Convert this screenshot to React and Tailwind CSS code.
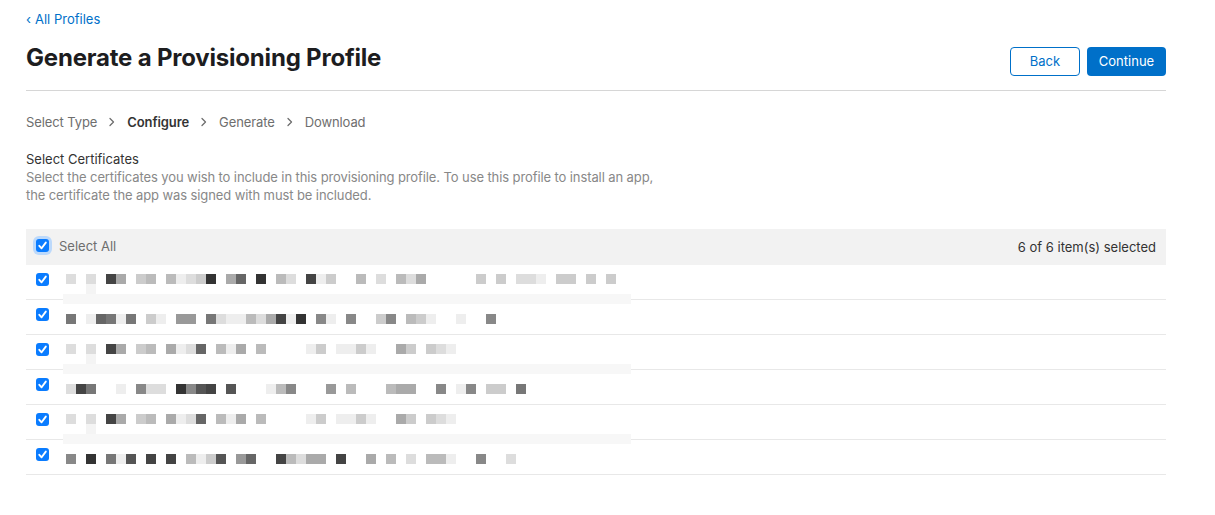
import React from "react";

const font = { fontFamily: "Inter, 'Noto Sans', sans-serif" };

// redacted names, one char per 10px cell: '3' dark ... 'f' white
const rows = [
  { text: "dfdf4afcbfbedc3fa6f3fbdf4ecffbfdfbdafffffcfcfddefccfcfc", tall: true },
  { text: "7fe67e7fcef99f7deebda4e3f8ef8ffc8fbceffeff8" },
  { text: "dfdf4afcbfaed6fbeafbffffecfeeceffacfcde", tall: true },
  { text: "d47ffef8ddf3854f5fffeb8fff9fbfffbaaff8fe8fccf7f" },
  { text: "dfdf4afcbfaed6fbeafbffffecfeeceffacfcde", tall: true },
  { text: "8f3f7e5f4f4fbec5f96ff4bdaaf4ffafbfdfbbeff8ffd" },
];

function shade(c) {
  return c === "f" ? "#ffffff" : "#" + c.repeat(6);
}

function Check({ focus }) {
  return (
    <span
      className={`flex w-[13px] h-[13px] shrink-0 items-center justify-center rounded-[3px] bg-[#0a7cff] ${
        focus ? "shadow-[0_0_0_3px_#bcd9fb]" : ""
      }`}
    >
      <svg width="11" height="11" viewBox="0 0 11 11" fill="none">
        <path d="M2.3 5.8 L4.6 8.3 L8.8 2.6" stroke="white" strokeWidth="1.9" strokeLinecap="round" strokeLinejoin="round" />
      </svg>
    </span>
  );
}

function Chevron() {
  return (
    <svg width="8" height="10" viewBox="0 0 8 10" fill="none" className="mx-[11px]">
      <path d="M2 1.5 L5.5 5 L2 8.5" stroke="#6e6e6e" strokeWidth="1.3" strokeLinecap="round" strokeLinejoin="round" />
    </svg>
  );
}

function Mosaic({ text, tall }) {
  return (
    <div className={`ml-[17px] flex flex-col ${tall ? "mt-[9px]" : "mt-[14px]"}`}>
      <div className="flex">
        {text.split("").map((c, i) => (
          <span key={i} className="block w-[10px] h-[10px]" style={{ backgroundColor: shade(c) }} />
        ))}
      </div>
      {tall && (
        <>
          <span className="block ml-[20px] w-[10px] h-[10px] bg-[#f4f4f4]" />
          <span className="block -ml-[3px] w-[568px] h-[10px] bg-[#f7f7f7]" />
        </>
      )}
    </div>
  );
}

export default function App() {
  return (
    <div className="min-h-screen bg-white text-[13px] text-[#333]" style={font}>
      <div className="ml-[26px] w-[1140px] pt-[11px]">
        <a className="flex items-center gap-[4px] text-[#0070c9] leading-[16px]">
          <span className="text-[13px]">‹</span>
          <span>All Profiles</span>
        </a>

        <div className="flex items-start justify-between mt-[16px] pb-[14px] border-b border-[#d6d6d6]">
          <h1 className="text-[24px] font-bold text-[#1d1d1f] leading-[30px] tracking-[-0.2px]">
            Generate a Provisioning Profile
          </h1>
          <div className="flex gap-[7px] mt-[4px]">
            <button className="w-[70px] h-[29px] rounded-[4px] border border-[#0070c9] text-[#0070c9] bg-white">Back</button>
            <button className="w-[79px] h-[29px] rounded-[4px] bg-[#0070c9] text-white">Continue</button>
          </div>
        </div>

        <div className="flex items-center mt-[22px] leading-[18px] text-[#6e6e6e] tracking-[-0.1px]">
          <span>Select Type</span>
          <Chevron />
          <span className="font-semibold text-[#333]">Configure</span>
          <Chevron />
          <span>Generate</span>
          <Chevron />
          <span>Download</span>
        </div>

        <div className="mt-[19px] leading-[18px]">
          <div className="text-[#333]">Select Certificates</div>
          <p className="text-[#888] max-w-[645px] tracking-[-0.1px]">
            Select the certificates you wish to include in this provisioning profile. To use this profile to install an app,
            the certificate the app was signed with must be included.
          </p>
        </div>

        <div className="mt-[25px]">
          <div className="flex items-center justify-between h-[36px] bg-[#f2f2f2] pl-[10px] pr-[10px]">
            <div className="flex items-center">
              <span className="-mt-[4px]">
                <Check focus />
              </span>
              <span className="ml-[10px] text-[#6e6e6e]">Select All</span>
            </div>
            <span className="text-[#333] mt-[2px]">6 of 6 item(s) selected</span>
          </div>
          {rows.map((r, i) => (
            <div key={i} className="flex items-start h-[35px] border-b border-[#e8e8e8] pl-[10px]">
              <span className="mt-[8px]">
                <Check />
              </span>
              <Mosaic text={r.text} tall={r.tall} />
            </div>
          ))}
        </div>
      </div>
    </div>
  );
}
